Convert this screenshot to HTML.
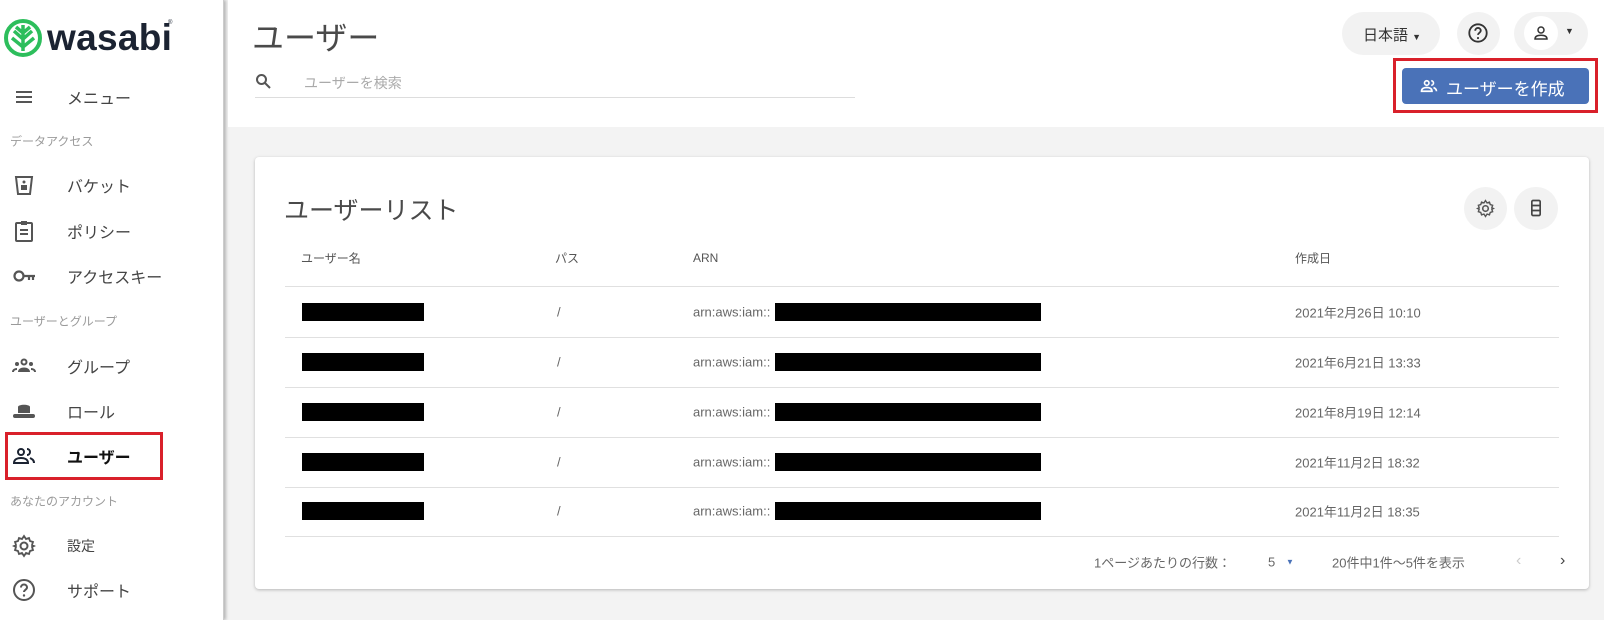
<!DOCTYPE html>
<html><head><meta charset="utf-8"><style>
*{box-sizing:border-box;margin:0;padding:0}
body{width:1604px;height:620px;position:relative;overflow:hidden;background:#f3f3f3;font-family:"Liberation Sans","Noto Sans CJK JP",sans-serif;color:#444}
.a{position:absolute;white-space:nowrap}
#side{position:absolute;left:0;top:0;width:224px;height:620px;background:#fff;border-right:1px solid #ccc;box-shadow:2px 0 3px rgba(0,0,0,.25)}
.mi{position:absolute;left:67px;font-size:16px;color:#444;transform:translateY(-50%)}
.sec{position:absolute;left:10px;font-size:12px;color:#9a9a9a;transform:translateY(-50%)}
.ic{position:absolute;left:12px;width:24px;height:24px;transform:translateY(-50%)}
#top{position:absolute;left:228px;top:0;width:1376px;height:127px;background:#fff}
.pill{position:absolute;background:#f2f2f2;border-radius:22px}
#card{position:absolute;left:255px;top:157px;width:1334px;height:432px;background:#fff;border-radius:4px;box-shadow:0 1px 3px rgba(0,0,0,.25)}
.hl{position:absolute;left:285px;width:1274px;height:1px;background:#e0e0e0}
.td{position:absolute;font-size:13px;color:#666;transform:translateY(-50%)}
.blk{position:absolute;background:#000;height:18px}
</style></head><body>
<div id="side">
 <svg class="a" style="left:4px;top:19px" width="38" height="38" viewBox="0 0 38 38"><circle cx="19" cy="19" r="17" fill="none" stroke="#2dbe5c" stroke-width="4"/><path d="M19 6v26M10 12l9 8 9-8M8 19l11 9 11-9M12 8l7 6 7-6" stroke="#2dbe5c" stroke-width="3.5" fill="none"/></svg>
 <div class="a" style="left:47px;top:17px;font-size:37px;font-weight:bold;color:#1b2332;letter-spacing:0.3px">wasabi</div>
 <div class="a" style="left:168px;top:20px;font-size:6px;color:#1b2332">®</div>
 <svg class="ic" style="top:97px" viewBox="0 0 24 24"><path d="M4 7h16M4 12h16M4 17h16" stroke="#555" stroke-width="2"/></svg>
 <div class="mi" style="top:97px">メニュー</div>
 <div class="sec" style="top:141px">データアクセス</div>
 <svg class="ic" style="top:185px" viewBox="0 0 24 24"><path d="M4 4h16l-2 17H6z" stroke="#555" stroke-width="2" fill="none"/><rect x="9" y="12" width="6" height="5" fill="#555"/><circle cx="12" cy="9" r="1.5" fill="#555"/></svg>
 <div class="mi" style="top:185px">バケット</div>
 <svg class="ic" style="top:231px" viewBox="0 0 24 24"><rect x="4" y="4" width="16" height="18" rx="1" stroke="#555" stroke-width="2" fill="none"/><rect x="9" y="2" width="6" height="4" fill="#555"/><path d="M8 11h8M8 15h8" stroke="#555" stroke-width="2"/></svg>
 <div class="mi" style="top:231px">ポリシー</div>
 <svg class="ic" style="top:276px" viewBox="0 0 24 24"><circle cx="7" cy="12" r="4.5" stroke="#555" stroke-width="2.2" fill="none"/><path d="M11 12h12M17 12v4M21 12v4" stroke="#555" stroke-width="2.2"/></svg>
 <div class="mi" style="top:276px">アクセスキー</div>
 <div class="sec" style="top:321px">ユーザーとグループ</div>
 <svg class="ic" style="top:366px" viewBox="0 0 24 24"><circle cx="12" cy="8" r="2.5" fill="none" stroke="#555" stroke-width="2"/><circle cx="5" cy="10" r="2" fill="#555"/><circle cx="19" cy="10" r="2" fill="#555"/><path d="M6 18c0-3 3-4.5 6-4.5s6 1.5 6 4.5z" fill="#555"/><path d="M1 18c0-2 2-3 4-3M23 18c0-2-2-3-4-3" stroke="#555" stroke-width="2" fill="none"/></svg>
 <div class="mi" style="top:366px">グループ</div>
 <svg class="ic" style="top:411px" viewBox="0 0 24 24"><path d="M6 8c0-3 12-3 12 0v6H6z" fill="#555"/><rect x="1" y="15" width="22" height="4" rx="2" fill="#555"/></svg>
 <div class="mi" style="top:411px">ロール</div>
 <div class="a" style="left:5px;top:432px;width:158px;height:48px;border:3px solid #d9202a"></div>
 <svg class="ic" style="top:456px" viewBox="0 0 24 24"><circle cx="9" cy="8" r="3" fill="none" stroke="#1b2332" stroke-width="2"/><path d="M2 19c0-4 4-5 7-5s7 1 7 5z" fill="none" stroke="#1b2332" stroke-width="2"/><path d="M15 5a3 3 0 010 6M18 14c2 1 4 2 4 5" stroke="#1b2332" stroke-width="2" fill="none"/></svg>
 <div class="mi" style="top:456px;font-weight:bold;color:#111">ユーザー</div>
 <div class="sec" style="top:501px">あなたのアカウント</div>
 <svg class="ic" style="top:546px" viewBox="0 0 24 24"><circle cx="12" cy="12" r="3.5" stroke="#555" stroke-width="2" fill="none"/><path d="M12 2l2 3 3-1 1 3 3 1-1 3 2 1-2 1 1 3-3 1-1 3-3-1-2 3-2-3-3 1-1-3-3-1 1-3-2-1 2-1-1-3 3-1 1-3 3 1z" stroke="#555" stroke-width="1.8" fill="none"/></svg>
 <div class="mi" style="top:546px;font-size:14px">設定</div>
 <svg class="ic" style="top:590px" viewBox="0 0 24 24"><circle cx="12" cy="12" r="10" stroke="#555" stroke-width="2" fill="none"/><path d="M9 9.5a3 3 0 116 0c0 2-3 2.5-3 4.5" stroke="#555" stroke-width="2" fill="none"/><circle cx="12" cy="17.5" r="1.2" fill="#555"/></svg>
 <div class="mi" style="top:590px">サポート</div>
</div>
<div id="top"></div>
<div class="a" style="left:252px;top:13px;font-size:32px;color:#4a4a4a">ユーザー</div>
<svg class="a" style="left:255px;top:73px" width="16" height="16" viewBox="0 0 16 16"><circle cx="6.5" cy="6.5" r="4.5" stroke="#555" stroke-width="2" fill="none"/><path d="M10 10l5 5" stroke="#555" stroke-width="2"/></svg>
<div class="a" style="left:304px;top:73px;font-size:14px;color:#aaa">ユーザーを検索</div>
<div class="a" style="left:255px;top:97px;width:600px;height:1px;background:#ddd"></div>
<div class="pill" style="left:1342px;top:12px;width:98px;height:43px"></div>
<div class="a" style="left:1363px;top:24px;font-size:15px;color:#333">日本語 <span style="font-size:9px">▼</span></div>
<div class="pill" style="left:1457px;top:12px;width:43px;height:43px"></div>
<svg class="a" style="left:1467px;top:22px" width="22" height="22" viewBox="0 0 24 24"><circle cx="12" cy="12" r="9.5" stroke="#333" stroke-width="2" fill="none"/><path d="M9 9.5a3 3 0 116 0c0 2-3 2.5-3 4.5" stroke="#333" stroke-width="2" fill="none"/><circle cx="12" cy="17.5" r="1.2" fill="#333"/></svg>
<div class="pill" style="left:1514px;top:12px;width:74px;height:43px"></div>
<div class="a" style="left:1524px;top:16px;width:34px;height:34px;background:#fff;border-radius:50%"></div>
<svg class="a" style="left:1532px;top:24px" width="18" height="18" viewBox="0 0 24 24"><circle cx="12" cy="8" r="4" stroke="#333" stroke-width="2" fill="none"/><path d="M4 20c0-4 4-5 8-5s8 1 8 5z" stroke="#333" stroke-width="2" fill="none"/></svg>
<div class="a" style="left:1565px;top:26px;font-size:9px;color:#333">▼</div>
<div class="a" style="left:1393px;top:58px;width:205px;height:55px;border:3px solid #d9202a;background:#fff"></div>
<div class="a" style="left:1402px;top:68px;width:187px;height:36px;background:#4a72b8;border-radius:4px"></div>
<svg class="a" style="left:1420px;top:77px" width="18" height="18" viewBox="0 0 24 24"><circle cx="9" cy="8" r="3" fill="none" stroke="#fff" stroke-width="2.2"/><path d="M2 19c0-4 4-5 7-5s7 1 7 5z" fill="none" stroke="#fff" stroke-width="2.2"/><path d="M15 5a3 3 0 010 6M18 14c2 1 4 2 4 5" stroke="#fff" stroke-width="2.2" fill="none"/></svg>
<div class="a" style="left:1446px;top:75px;font-size:17px;color:#fff">ユーザーを作成</div>
<div id="card"></div>
<div class="a" style="left:284px;top:191px;font-size:25px;color:#4a4a4a">ユーザーリスト</div>
<div class="pill" style="left:1464px;top:187px;width:43px;height:43px"></div>
<svg class="a" style="left:1476px;top:199px" width="19" height="19" viewBox="0 0 24 24"><circle cx="12" cy="12" r="3.5" stroke="#555" stroke-width="2" fill="none"/><path d="M12 2l2 3 3-1 1 3 3 1-1 3 2 1-2 1 1 3-3 1-1 3-3-1-2 3-2-3-3 1-1-3-3-1 1-3-2-1 2-1-1-3 3-1 1-3 3 1z" stroke="#555" stroke-width="1.8" fill="none"/></svg>
<div class="pill" style="left:1514px;top:187px;width:44px;height:43px"></div>
<svg class="a" style="left:1526px;top:198px" width="20" height="20" viewBox="0 0 24 24"><rect x="7" y="3" width="10" height="18" rx="1.5" stroke="#444" stroke-width="2" fill="none"/><path d="M7 9h10M7 15h10" stroke="#444" stroke-width="2"/></svg>
<div class="td" style="left:301px;top:258px;font-size:12px;color:#555">ユーザー名</div>
<div class="td" style="left:555px;top:258px;font-size:12px;color:#555">パス</div>
<div class="td" style="left:693px;top:258px;font-size:12px;color:#555">ARN</div>
<div class="td" style="left:1295px;top:258px;font-size:12px;color:#555">作成日</div>
<div class="hl" style="top:286px"></div>
<div class="hl" style="top:337px"></div>
<div class="hl" style="top:387px"></div>
<div class="hl" style="top:437px"></div>
<div class="hl" style="top:487px"></div>
<div class="hl" style="top:536px"></div>
<div class="blk" style="left:302px;top:303px;width:122px"></div><div class="td" style="left:557px;top:312px">/</div><div class="td" style="left:693px;top:312px">arn:aws:iam::</div><div class="blk" style="left:775px;top:303px;width:266px"></div><div class="td" style="left:1295px;top:312px">2021年2月26日 10:10</div>
<div class="blk" style="left:302px;top:353px;width:122px"></div><div class="td" style="left:557px;top:362px">/</div><div class="td" style="left:693px;top:362px">arn:aws:iam::</div><div class="blk" style="left:775px;top:353px;width:266px"></div><div class="td" style="left:1295px;top:362px">2021年6月21日 13:33</div>
<div class="blk" style="left:302px;top:403px;width:122px"></div><div class="td" style="left:557px;top:412px">/</div><div class="td" style="left:693px;top:412px">arn:aws:iam::</div><div class="blk" style="left:775px;top:403px;width:266px"></div><div class="td" style="left:1295px;top:412px">2021年8月19日 12:14</div>
<div class="blk" style="left:302px;top:453px;width:122px"></div><div class="td" style="left:557px;top:462px">/</div><div class="td" style="left:693px;top:462px">arn:aws:iam::</div><div class="blk" style="left:775px;top:453px;width:266px"></div><div class="td" style="left:1295px;top:462px">2021年11月2日 18:32</div>
<div class="blk" style="left:302px;top:502px;width:122px"></div><div class="td" style="left:557px;top:511px">/</div><div class="td" style="left:693px;top:511px">arn:aws:iam::</div><div class="blk" style="left:775px;top:502px;width:266px"></div><div class="td" style="left:1295px;top:511px">2021年11月2日 18:35</div>
<div class="td" style="left:1094px;top:562px">1ページあたりの行数：</div>
<div class="td" style="left:1268px;top:562px">5</div>
<div class="td" style="left:1286px;top:562px;font-size:8px;color:#4a72b8">▼</div>
<div class="td" style="left:1332px;top:562px">20件中1件～5件を表示</div>
<div class="td" style="left:1516px;top:561px;font-size:16px;color:#ccc">‹</div>
<div class="td" style="left:1560px;top:561px;font-size:16px;color:#444">›</div>
</body></html>
